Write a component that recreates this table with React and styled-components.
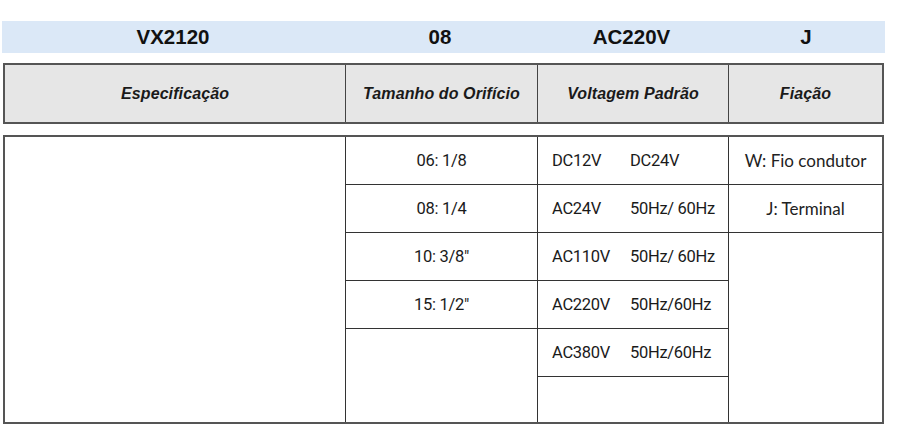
import React from 'react';
import styled, { createGlobalStyle } from 'styled-components';

const GlobalStyle = createGlobalStyle`
  html, body {
    margin: 0;
    padding: 0;
    background: #ffffff;
  }
  * {
    box-sizing: border-box;
  }
`;

const Page = styled.div`
  width: 905px;
  height: 440px;
  padding: 21px 0 0 2px;
  background: #ffffff;
`;

const columns = '341px 192px 191px 1fr';

const CodeBar = styled.div`
  display: grid;
  grid-template-columns: 342px 192px 191px 1fr;
  width: 883px;
  height: 32px;
  background: #dbe8f7;
  font-family: 'Liberation Sans', Arial, sans-serif;
  font-weight: bold;
  font-size: 20.5px;
  color: #111111;
`;

const CodeItem = styled.div`
  display: flex;
  align-items: center;
  justify-content: center;
`;

const Table = styled.div`
  display: grid;
  grid-template-columns: ${columns};
  width: 881px;
  height: ${(p) => p.$height}px;
  margin: ${(p) => p.$top}px 0 0 1px;
  border: 2px solid #555555;
  background: ${(p) => p.$bg || '#ffffff'};
`;

const HeadCell = styled.div`
  display: flex;
  align-items: center;
  justify-content: center;
  border-right: ${(p) => (p.$last ? 'none' : '1.5px solid #444444')};
  font-family: 'Liberation Sans', Arial, sans-serif;
  font-weight: bold;
  font-style: italic;
  font-size: 16px;
  letter-spacing: 0.1px;
  color: #1a1a1a;
`;

const Column = styled.div`
  display: flex;
  flex-direction: column;
  border-right: ${(p) => (p.$last ? 'none' : '1.5px solid #333333')};
`;

const Cell = styled.div`
  display: flex;
  align-items: center;
  justify-content: center;
  height: 48px;
  flex: none;
  border-bottom: 1.5px solid #333333;
  font-family: Roboto, 'Liberation Sans', Arial, sans-serif;
  font-size: 16.5px;
  letter-spacing: -0.3px;
  color: #1a1a1a;
`;

const VoltCell = styled(Cell)`
  display: grid;
  grid-template-columns: 78px auto;
  align-items: center;
  justify-content: start;
  padding-left: 14px;
`;

const WireCell = styled(Cell)`
  font-family: Lato, 'Noto Sans', sans-serif;
  font-size: 17px;
  letter-spacing: 0;
  color: #222222;
`;

const Filler = styled.div`
  flex: 1;
`;

const codes = ['VX2120', '08', 'AC220V', 'J'];
const heads = ['Especificação', 'Tamanho do Orifício', 'Voltagem Padrão', 'Fiação'];
const sizes = ['06: 1/8', '08: 1/4', '10: 3/8"', '15: 1/2"'];
const volts = [
  ['DC12V', 'DC24V'],
  ['AC24V', '50Hz/ 60Hz'],
  ['AC110V', '50Hz/ 60Hz'],
  ['AC220V', '50Hz/60Hz'],
  ['AC380V', '50Hz/60Hz'],
];
const wires = ['W: Fio condutor', 'J: Terminal'];

export default function App() {
  return (
    <>
      <GlobalStyle />
      <Page>
        <CodeBar>
          {codes.map((c) => (
            <CodeItem key={c}>{c}</CodeItem>
          ))}
        </CodeBar>

        <Table $top={10} $height={61} $bg="#e6e6e6">
          {heads.map((h, i) => (
            <HeadCell key={h} $last={i === heads.length - 1}>
              {h}
            </HeadCell>
          ))}
        </Table>

        <Table $top={11} $height={289}>
          <Column />
          <Column>
            {sizes.map((s) => (
              <Cell key={s}>{s}</Cell>
            ))}
            <Filler />
          </Column>
          <Column>
            {volts.map(([a, b]) => (
              <VoltCell key={a}>
                <span>{a}</span>
                <span>{b}</span>
              </VoltCell>
            ))}
            <Filler />
          </Column>
          <Column $last>
            {wires.map((w) => (
              <WireCell key={w}>{w}</WireCell>
            ))}
            <Filler />
          </Column>
        </Table>
      </Page>
    </>
  );
}
